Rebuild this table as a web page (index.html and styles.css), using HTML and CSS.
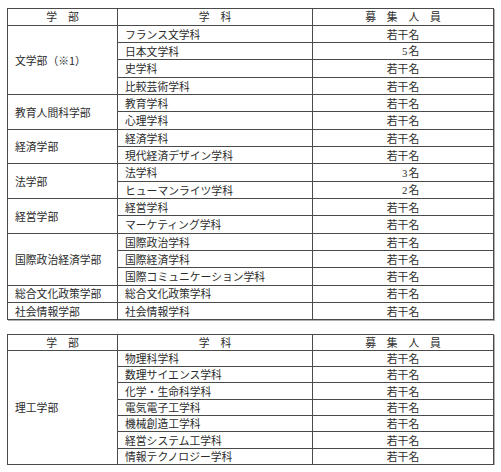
FILE: index.html
```html
<!DOCTYPE html>
<html lang="ja">
<head>
<meta charset="utf-8">
<title>募集人員</title>
<link rel="stylesheet" href="styles.css">
</head>
<body>
<div class="page">
<table class="quota first">
  <colgroup><col class="c1"><col class="c2"><col class="c3"></colgroup>
  <thead>
    <tr><th>学　部</th><th>学　科</th><th>募　集　人　員</th></tr>
  </thead>
  <tbody>
    <tr><td class="fac" rowspan="4">文学部（※1）</td><td>フランス文学科</td><td class="n">若干名</td></tr>
    <tr><td>日本文学科</td><td class="n"><span class="num">5名</span></td></tr>
    <tr><td>史学科</td><td class="n">若干名</td></tr>
    <tr><td>比較芸術学科</td><td class="n">若干名</td></tr>
    <tr><td class="fac" rowspan="2">教育人間科学部</td><td>教育学科</td><td class="n">若干名</td></tr>
    <tr><td>心理学科</td><td class="n">若干名</td></tr>
    <tr><td class="fac" rowspan="2">経済学部</td><td>経済学科</td><td class="n">若干名</td></tr>
    <tr><td>現代経済デザイン学科</td><td class="n">若干名</td></tr>
    <tr><td class="fac" rowspan="2">法学部</td><td>法学科</td><td class="n"><span class="num">3名</span></td></tr>
    <tr><td>ヒューマンライツ学科</td><td class="n"><span class="num">2名</span></td></tr>
    <tr><td class="fac" rowspan="2">経営学部</td><td>経営学科</td><td class="n">若干名</td></tr>
    <tr><td>マーケティング学科</td><td class="n">若干名</td></tr>
    <tr><td class="fac" rowspan="3">国際政治経済学部</td><td>国際政治学科</td><td class="n">若干名</td></tr>
    <tr><td>国際経済学科</td><td class="n">若干名</td></tr>
    <tr><td>国際コミュニケーション学科</td><td class="n">若干名</td></tr>
    <tr><td class="fac">総合文化政策学部</td><td>総合文化政策学科</td><td class="n">若干名</td></tr>
    <tr><td class="fac">社会情報学部</td><td>社会情報学科</td><td class="n">若干名</td></tr>
  </tbody>
</table>

<table class="quota second">
  <colgroup><col class="c1"><col class="c2"><col class="c3"></colgroup>
  <thead>
    <tr><th>学　部</th><th>学　科</th><th>募　集　人　員</th></tr>
  </thead>
  <tbody>
    <tr><td class="fac" rowspan="7">理工学部</td><td>物理科学科</td><td class="n">若干名</td></tr>
    <tr><td>数理サイエンス学科</td><td class="n">若干名</td></tr>
    <tr><td>化学・生命科学科</td><td class="n">若干名</td></tr>
    <tr><td>電気電子工学科</td><td class="n">若干名</td></tr>
    <tr><td>機械創造工学科</td><td class="n">若干名</td></tr>
    <tr><td>経営システム工学科</td><td class="n">若干名</td></tr>
    <tr><td>情報テクノロジー学科</td><td class="n">若干名</td></tr>
  </tbody>
</table>
</div>
</body>
</html>
```

FILE: styles.css
```css
html, body {
  margin: 0;
  padding: 0;
  background: #ffffff;
}

.page {
  padding: 7.5px 0 0 7px;
  font-family: "Noto Sans CJK JP", "Liberation Serif", sans-serif;
  font-size: 10.8px;
  color: #2b2b2b;
}

.quota {
  border-collapse: collapse;
  table-layout: fixed;
  width: 486px;
  border: 1px solid #6a6a6a;
  box-shadow: 1px 1px 0 #b0b0b0;
}

.quota .c1 { width: 110px; }
.quota .c2 { width: 195px; }
.quota .c3 { width: 181px; }

.quota th,
.quota td {
  border: 1px solid #4a4a4a;
  padding: 0 0 0 7px;
  line-height: 1;
  font-weight: normal;
  white-space: nowrap;
  vertical-align: middle;
  text-align: left;
}

.quota th {
  text-align: center;
  padding: 0;
}

.first tr { height: 17.33px; }
.first thead tr { height: 17.3px; }

.second { margin-top: 13.5px; }
.second thead tr { height: 16px; }
.second tbody tr { height: 16.3px; }

.quota td.n {
  text-align: center;
  padding: 0;
}

.num {
  display: inline-block;
  width: 3em;
  text-align: right;
  font-family: "Liberation Serif", "Noto Sans CJK JP", serif;
}

.num::first-letter {
  letter-spacing: 1px;
}
```
